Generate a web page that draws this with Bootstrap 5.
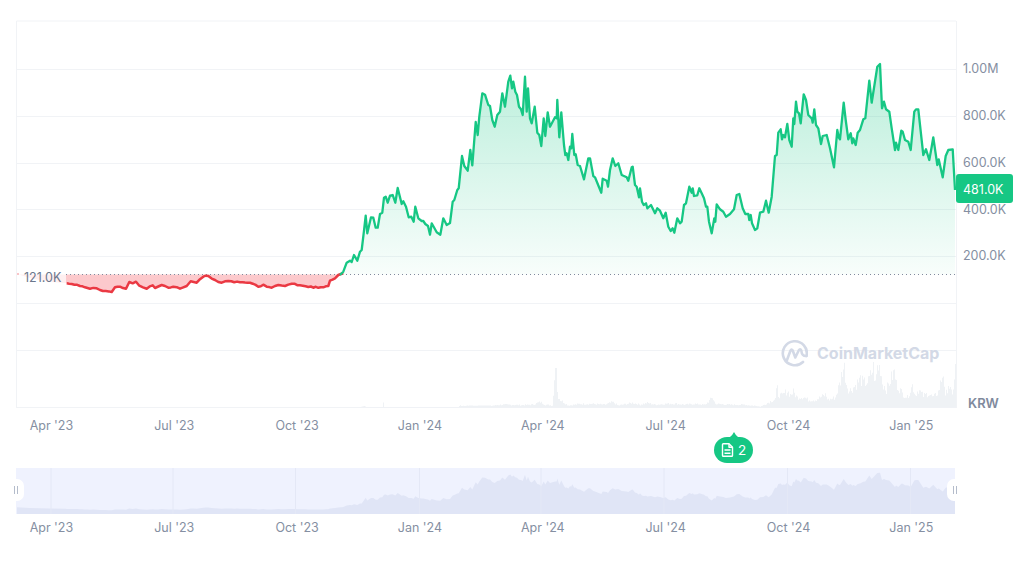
<!DOCTYPE html>
<html lang="en">
<head>
<meta charset="utf-8">
<title>CoinMarketCap price chart</title>
<link href="https://cdn.jsdelivr.net/npm/bootstrap@5.3.0/dist/css/bootstrap.min.css" rel="stylesheet">
<style>
html,body{height:100%;background:#fff;overflow:hidden}
body{font-family:Inter,"Liberation Sans",sans-serif;color:#858fa2}
.chart-root{width:1024px;height:568px}
.plot-svg{display:block;width:957px;height:408px;flex:none}
.y-scale{width:67px;height:408px;padding:45.3px 0 0 6px;font-size:12.5px}
.y-tick{height:46.8px;line-height:47px}
.unit-tag{font-weight:600;font-size:13px;line-height:18px;padding-left:5px;margin-bottom:-4px;color:#808a9d}
.x-scale{display:grid;grid-template-columns:repeat(8,122.85px);margin-left:-10px;width:1000px;font-size:12.5px;line-height:18px;text-align:center}
.x-main{margin-top:9px}
.x-nav{margin-top:5px}
.nav-svg{display:block;width:1024px;height:46px;margin-top:33px}
.price-tag{left:956px;top:174px;width:57px;height:29px;line-height:31px;background:#16c784;color:#fff;border-radius:3px;font-size:12.5px;padding-left:7px}
.base-tag{left:17px;top:268px;width:49px;height:18px;line-height:19px;background:rgba(255,255,255,.7);color:#6b778c;font-size:12.5px;padding-left:7px}
.news-pin{left:714px;top:437px;width:39px;height:26px;background:#16c784;color:#fff;border-radius:13px;font-size:13.5px;gap:4px}
.news-pin::before{content:"";position:absolute;left:11px;top:-5px;width:18px;height:7px;background:#16c784;clip-path:path("M0 7Q6 6 9 0Q12 6 18 7Z")}
.brand-mark{left:781px;top:338px;gap:9px;color:#d3d9e6;font-weight:700;font-size:16px;line-height:30px}
</style>
</head>
<body class="m-0">
<div class="chart-root position-relative">
  <div class="d-flex">
    <svg class="plot-svg" viewBox="0 0 957 408" aria-hidden="true">
      <defs>
        <linearGradient id="greenFade" gradientUnits="userSpaceOnUse" x1="0" y1="64" x2="0" y2="274">
          <stop offset="0" stop-color="#16c784" stop-opacity=".3"/>
          <stop offset="1" stop-color="#16c784" stop-opacity=".03"/>
        </linearGradient>
      </defs>
      <g stroke="#f1f3f6" stroke-width="1" fill="none">
        <path d="M16.5 21H956M16.5 69.5H956M16.5 116.5H956M16.5 163.5H956M16.5 209.5H956M16.5 256.5H956M16.5 303.5H956M16.5 350.5H956M16.5 407.5H956M16.5 21V408M956.5 21V408"/>
      </g>
      <path id="volBars" fill="#eff2f5"/>
      <path id="redArea" fill="#fcc9cc"/>
      <path id="greenArea" fill="url(#greenFade)"/>
      <path d="M66 274.5H956" stroke="#808a9d" stroke-width="1" stroke-dasharray="1 3" fill="none"/>
      <polyline id="redLine" fill="none" stroke="#ea3943" stroke-width="2.500" stroke-linejoin="round"/>
      <polyline id="greenLine" fill="none" stroke="#16c784" stroke-width="2.300" stroke-linejoin="round"/>
      <path d="M17 274H19" stroke="#ea3943" stroke-width="2"/>
    </svg>
    <div class="y-scale d-flex flex-column">
      <div class="y-tick">1.00M</div>
      <div class="y-tick">800.0K</div>
      <div class="y-tick">600.0K</div>
      <div class="y-tick">400.0K</div>
      <div class="y-tick">200.0K</div>
      <div class="unit-tag mt-auto">KRW</div>
    </div>
  </div>
  <div class="x-scale x-main">
    <span>Apr '23</span><span>Jul '23</span><span>Oct '23</span><span>Jan '24</span><span>Apr '24</span><span>Jul '24</span><span>Oct '24</span><span>Jan '25</span>
  </div>
  <svg class="nav-svg" viewBox="0 468 1024 46" aria-hidden="true">
    <rect x="16" y="468" width="939" height="46" fill="#eff2fe"/>
    <path id="navArea" fill="#e0e5f6"/>
    <path d="M51 468V514M173 468V514M295.500 468V514M419.500 468V514M541 468V514M664 468V514M787.500 468V514M910.500 468V514" stroke="#e4e8f6" stroke-width="1"/>
    <rect x="8" y="479" width="16" height="22" rx="7" fill="#fff"/>
    <rect x="947" y="479" width="16" height="22" rx="7" fill="#fff"/>
    <path d="M14.500 486V494M17.500 486V494M953.500 486V494M956.500 486V494" stroke="#b4bccb" stroke-width="1"/>
  </svg>
  <div class="x-scale x-nav">
    <span>Apr '23</span><span>Jul '23</span><span>Oct '23</span><span>Jan '24</span><span>Apr '24</span><span>Jul '24</span><span>Oct '24</span><span>Jan '25</span>
  </div>

  <div class="base-tag position-absolute">121.0K</div>
  <div class="price-tag position-absolute">481.0K</div>
  <div class="brand-mark position-absolute d-flex align-items-center">
    <svg width="27" height="28" viewBox="781 338 27 28" aria-hidden="true" fill="none" stroke="#d3d9e6" stroke-width="2.600" stroke-linecap="round" stroke-linejoin="round">
      <path d="M806.500 355A12 12 0 1 0 803 361"/>
      <path d="M787 359L790.500 349.500Q791.500 347.500 792.700 349.500L795.300 356.500L798.700 349.500Q800.200 347 801.300 349.500Q801.800 355.500 806.500 355"/>
    </svg>
    <span>CoinMarketCap</span>
  </div>
  <div class="news-pin position-absolute d-flex align-items-center justify-content-center">
    <svg width="13" height="14" viewBox="0 0 12 14" aria-hidden="true" fill="none" stroke="#fff" stroke-width="1.400" stroke-linejoin="round">
      <path d="M1 1.500Q1 .7 1.800 .7H7.500L11 4.200V12.500Q11 13.300 10.200 13.300H1.800Q1 13.300 1 12.500Z"/>
      <path d="M7.500 .7V4.200H11M3 7H9M3 10.200H9"/>
    </svg>
    <span>2</span>
  </div>
</div>
<script src="https://cdn.jsdelivr.net/npm/bootstrap@5.3.0/dist/js/bootstrap.bundle.min.js"></script>
<script>
(function(){
  function map(a,ox,oy){var r=[];for(var i=0;i<a.length;i+=2){r.push([ox+a[i]/3,oy+a[i+1]/3]);}return r;}
  var seed=7;function rnd(){seed=(seed*9301+49297)%233280;return seed/233280;}
  var red=map([200,130,215,132,240,138,270,146,290,145,300,150,335,156,345,142,360,140,378,146,388,126,398,130,408,125,418,137,440,146,458,136,465,144,485,135,505,143,520,140,540,146,560,138,572,124,590,128,610,110,625,108,645,120,665,128,685,123,720,127,750,128,775,140,790,134,800,140,815,143,835,135,855,138,875,131,900,136,925,141,970,142,985,138,990,122,1005,115,1015,105,1030,100],0,240);
  var rough=[];
  red.forEach(function(p,i){
    if(i){var q=red[i-1],n=Math.floor((p[0]-q[0])/2.5);
      for(var j=1;j<n;j++){var t=j/n;rough.push([q[0]+(p[0]-q[0])*t,q[1]+(p[1]-q[1])*t+(rnd()-.5)*1.4]);}}
    rough.push(p);
  });
  red=rough;
  var g1=map([0,645,10,635,20,608,30,602,35,606,42,585,52,602,60,575,65,570,72,512,77,467,82,520,93,472,100,473,107,503,113,503,120,462,127,458,132,413,137,410,143,428,150,407,158,405,166,428,173,384,185,432,190,424,198,440,206,472,214,470,221,485,226,440,235,475,245,483,250,483,256,492,264,498,270,524,275,490,290,517,301,524,310,475,320,495,330,489,338,425,343,420,352,390,356,385,366,288,373,318,383,332,391,270,397,316,407,186,413,225,418,170,427,100,435,104,445,135,450,138,457,180,464,200,472,165,480,155,487,100,495,140,505,65,511,47,516,85,520,65,526,95,531,105,537,140,543,148,548,165,555,50,560,155,564,85,570,175,575,190,584,140,592,218,598,225,604,258,611,175,616,228,623,157,630,200,645,172,650,175,652,120,658,232,664,157,672,255,676,285,680,280,685,300,690,260,694,265,697,222,703,285,707,283,713,315,720,318,732,358,745,295,750,295,760,348,765,352,784,398,788,356,800,362,804,380,810,330,818,295,826,318,835,310,845,345,860,352,865,362,875,322,878,320,885,375,890,380,897,412,900,385,906,425,911,435,918,430,922,445,933,435,945,460,952,445,960,452,970,475,977,458,985,500,992,513,998,505,1003,518,1012,475,1020,490],340,60);
  var g2=map([5,515,12,465,18,460,28,410,35,428,38,415,42,438,52,436,58,415,65,430,72,445,78,470,82,470,87,515,95,550,103,505,106,515,110,463,120,478,130,485,138,500,150,492,162,478,170,435,178,432,188,475,196,492,205,492,208,510,212,495,216,520,225,540,232,535,240,488,250,485,258,452,266,488,275,440,285,318,290,315,295,248,302,238,306,268,310,255,315,262,322,222,328,270,335,290,340,205,343,222,348,155,352,185,357,190,362,220,371,133,378,150,385,195,395,205,398,218,403,178,408,225,415,235,423,282,428,258,440,255,450,295,462,352,472,240,476,262,480,268,491,158,497,210,505,268,512,250,517,280,520,265,527,285,533,248,540,240,550,208,556,205,568,92,575,158,592,50,600,42,606,175,612,155,618,178,628,185,635,235,645,300,648,278,655,300,664,242,668,245,675,270,685,275,692,300,703,185,708,178,715,178,730,315,738,298,748,330,755,290,760,262,772,345,776,328,788,382,797,318,805,300,818,298,825,420],680,50);
  var green=g1.concat(g2);
  function pts(a){return a.map(function(p){return p[0].toFixed(1)+','+p[1].toFixed(1);}).join(' ');}
  function area(a,base){var s='M'+a[0][0].toFixed(1)+' '+base;a.forEach(function(p){s+='L'+p[0].toFixed(1)+' '+p[1].toFixed(1);});return s+'L'+a[a.length-1][0].toFixed(1)+' '+base+'Z';}
  var $=function(id){return document.getElementById(id);};
  var redAll=[[17,274],[30,278],[50,282],[66,283]].concat(red);
  $('redLine').setAttribute('points',pts(red));
  $('redArea').setAttribute('d',area(redAll,274.5));
  $('greenLine').setAttribute('points',pts(green));
  $('greenArea').setAttribute('d',area(green,274.5));
  var all=redAll.concat(green);
  var nav=all.map(function(p){return [p[0],0.165*p[1]+462.1];});
  $('navArea').setAttribute('d',area(nav,514));
  var env=[[360,407],[364,406],[366,407],[382,407],[383,402],[384,407],[458,407],[460,405],[473,405.7],[490,405.5],[500,404],[507,404],[520,404.5],[532,404],[540,400.7],[545,404],[552,405],[555,368],[556.5,368],[557,392],[560,398],[563,400.7],[568,405],[580,403],[593,403],[605,404],[612,400.7],[618,405],[632,401.7],[640,404],[647,401.7],[655,404],[667,402.7],[675,402.7],[685,404],[693,403],[705,404],[712,395],[715,403],[730,404],[745,404],[760,406.7],[770,400],[775,396.7],[776.7,381.7],[778,391.7],[781.7,393],[786.7,386.7],[790,391.7],[793,388],[796.7,395],[803,394],[808,398],[815,398],[825,391.7],[828,398],[835,395],[840,375],[842,360],[844,358],[846,378],[849,387],[855,380],[860,372],[863,377],[868,375],[873,358],[875,378],[877,357],[880,358],[882,377],[886,385],[892,368],[894,363],[896,378],[902,390],[907,395],[912,380],[915,392],[918,385],[923,393],[928,390],[933,395],[938,388],[943,363],[945,395],[948,378],[952,393],[955,358],[956,358]];
  function top(x){for(var i=1;i<env.length;i++){if(x<=env[i][0]){var a=env[i-1],b=env[i];return a[1]+(b[1]-a[1])*(x-a[0])/(b[0]-a[0]);}}return 407;}
  var d='';
  for(var x=360;x<956;x++){var h=407.5-top(x);var k=(h>2&&!(x>=554&&x<=557))?0.6+0.4*rnd():1;d+='M'+x+' 407.5V'+(407.5-h*k).toFixed(1)+'H'+(x+1)+'V407.5Z';}
  $('volBars').setAttribute('d',d);
})();
</script>
</body>
</html>
